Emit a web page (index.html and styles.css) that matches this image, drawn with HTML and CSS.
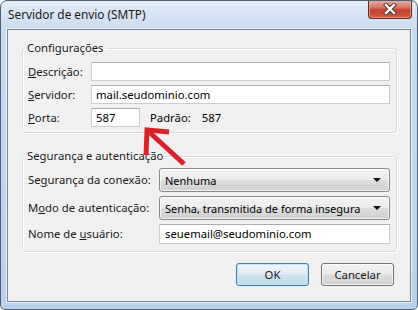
FILE: index.html
```html
<!DOCTYPE html>
<html lang="pt-BR">
<head>
  <meta charset="UTF-8">
  <title>Servidor de envio (SMTP)</title>
  <link rel="stylesheet" href="styles.css">
</head>
<body>
  <div class="window">
    <div class="titlebar">
      <span class="title">Servidor de envio (SMTP)</span>
      <div class="close">
        <svg width="16" height="12" viewBox="0 0 16 12">
          <path d="M4 2 L12 10 M12 2 L4 10" stroke="#4a3030" stroke-width="4.2" stroke-linecap="square"/>
          <path d="M4 2 L12 10 M12 2 L4 10" stroke="#ffffff" stroke-width="2.4" stroke-linecap="square"/>
        </svg>
      </div>
    </div>
    <div class="client">
      <fieldset class="group first">
        <legend>Configurações</legend>
        <div class="grid narrow">
          <span class="label"><u>D</u>escrição:</span>
          <div class="field"></div>
          <span class="label"><u>S</u>ervidor:</span>
          <div class="field">mail.seudominio.com</div>
          <span class="label"><u>P</u>orta:</span>
          <div class="port-row">
            <div class="field port">587</div>
            <span class="default-label">Padrão:</span>
            <span>587</span>
          </div>
        </div>
      </fieldset>

      <fieldset class="group second">
        <legend>Segurança e autenticação</legend>
        <div class="grid wide">
          <span class="label">Se<u>g</u>urança da conexão:</span>
          <div class="combo"><span>Nenhuma</span><i class="caret"></i></div>
          <span class="label">M<u>o</u>do de autenticação:</span>
          <div class="combo"><span>Senha, transmitida de forma insegura</span><i class="caret"></i></div>
          <span class="label">Nome de <u>u</u>suário:</span>
          <div class="field tall">seuemail@seudominio.com</div>
        </div>
      </fieldset>

      <div class="buttons">
        <div class="btn default">OK</div>
        <div class="btn">Cancelar</div>
      </div>
    </div>

    <!-- seta vermelha por cima do diálogo -->
    <svg class="arrow" width="418" height="310" viewBox="0 0 418 310">
      <path d="M147 130 L184 164" stroke="#d9232b" stroke-width="5" fill="none"/>
      <path d="M169 132 L147 130 L146 155" stroke="#d9232b" stroke-width="5" fill="none" stroke-linejoin="miter"/>
    </svg>
  </div>
</body>
</html>
```

FILE: styles.css
```css
html, body {
  margin: 0;
  padding: 0;
  background-color: #ffffff;
}
body {
  font-family: "Segoe UI", "Noto Sans", "DejaVu Sans", sans-serif;
  font-size: 11px;
  color: #000000;
}
.window {
  position: relative;
  width: 418px;
  height: 310px;
  box-sizing: border-box;
  border: 1px solid #4f5f75;
  border-radius: 7px 7px 5px 5px;
  background: linear-gradient(#e2ecf7, #c9dbef 30px, #bcd1ea);
  padding: 0 6px 7px 6px;
  display: flex;
  flex-direction: column;
  overflow: hidden;
}
.titlebar {
  height: 28px;
  display: flex;
  justify-content: space-between;
  align-items: flex-start;
}
.title {
  padding: 5px 0 0 1px;
  line-height: 16px;
  font-size: 11.8px;
  color: #1a1a1a;
}
.close {
  width: 44px;
  height: 19px;
  margin-top: -1px;
  margin-right: -1px;
  box-sizing: border-box;
  border: 1px solid #5c2a25;
  border-top: none;
  border-radius: 0 0 4px 4px;
  background: linear-gradient(#eab2a6, #d46f5e 45%, #c2412d 55%, #cf5c3f);
  display: flex;
  justify-content: center;
  align-items: center;
  box-shadow: inset 0 0 0 1px rgba(255, 200, 190, 0.5);
}
.client {
  flex: 1;
  background-color: #f0f0f0;
  border: 1px solid #7387a0;
  box-shadow: 0 0 0 1px #eaf1f9;
  padding: 10px 13px 0 14px;
  display: flex;
  flex-direction: column;
}
.group {
  margin: 0;
  border: 1px solid #d5dfe5;
  border-radius: 3px;
  box-shadow: inset 1px 1px 0 #ffffff, 1px 1px 0 #ffffff;
  padding: 6px 6px 5px 5px;
  min-width: 0;
}
.group legend {
  padding: 0 2px;
  margin-left: -3px;
  line-height: 16px;
  font-size: 11.3px;
  color: #1a1a1a;
}
.second {
  margin-top: 15px;
  padding: 4px 6px 7px 5px;
}
.grid {
  display: grid;
  row-gap: 4px;
  align-items: center;
}
.narrow {
  grid-template-columns: 63px 1fr;
}
.wide {
  grid-template-columns: 131px 1fr;
}
.label {
  line-height: 16px;
  font-size: 11.3px;
  color: #1a1a1a;
  white-space: nowrap;
}
.field {
  height: 19px;
  box-sizing: border-box;
  background-color: #ffffff;
  border: 1px solid #c9ccd2;
  border-top-color: #abadb3;
  padding: 0 4px;
  line-height: 17px;
  font-size: 11.3px;
}
.field.tall {
  height: 20px;
  line-height: 18px;
  padding-left: 5px;
}
.port-row {
  display: flex;
  align-items: center;
  font-size: 11.3px;
}
.port {
  width: 49px;
}
.default-label {
  margin: 0 11px 0 10px;
}
.combo {
  height: 24px;
  box-sizing: border-box;
  border: 1px solid #8a8a8a;
  border-radius: 3px;
  background: linear-gradient(#f3f3f3, #ebebeb 48%, #dddddd 52%, #d0d0d0);
  box-shadow: inset 0 0 0 1px rgba(255, 255, 255, 0.7);
  padding: 0 8px 0 5px;
  display: flex;
  align-items: center;
  justify-content: space-between;
  white-space: nowrap;
}
.caret {
  width: 0;
  height: 0;
  border-left: 4px solid transparent;
  border-right: 4px solid transparent;
  border-top: 4px solid #111111;
}
.buttons {
  margin-top: 11px;
  margin-right: 3px;
  display: flex;
  justify-content: flex-end;
  gap: 12px;
}
.btn {
  width: 73px;
  height: 23px;
  box-sizing: border-box;
  border: 1px solid #707070;
  border-radius: 3px;
  background: linear-gradient(#f2f2f2, #ebebeb 48%, #dddddd 52%, #cfcfcf);
  box-shadow: inset 0 0 0 1px rgba(255, 255, 255, 0.75);
  display: flex;
  align-items: center;
  justify-content: center;
  font-size: 11.3px;
  color: #1a1a1a;
}
.btn.default {
  border-color: #3c7fb1;
  background: linear-gradient(#eef6fb, #e0edf6 48%, #cfe3f0 52%, #c3dbec);
  box-shadow: inset 0 0 0 1px #bfe4f8;
}
.arrow {
  position: absolute;
  top: -1px;
  left: -1px;
  pointer-events: none;
}
```
